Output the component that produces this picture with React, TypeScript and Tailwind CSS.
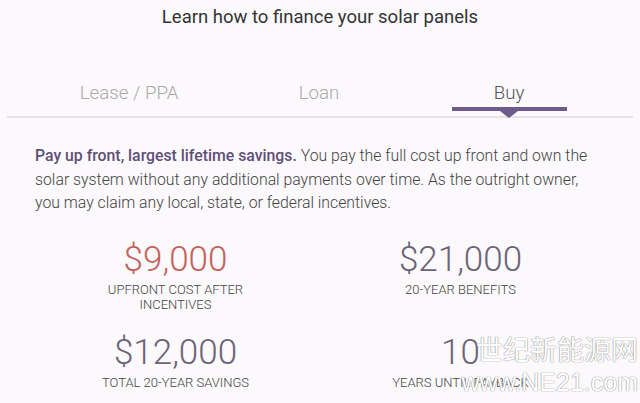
const tabs = ["Lease / PPA", "Loan", "Buy"];

const stats = [
  { value: "$9,000", label: "UPFRONT COST AFTER INCENTIVES", color: "text-[#c4615c]" },
  { value: "$21,000", label: "20-YEAR BENEFITS", color: "text-[#6b6478]" },
  { value: "$12,000", label: "TOTAL 20-YEAR SAVINGS", color: "text-[#6b6478]" },
  { value: "10", label: "YEARS UNTIL PAYBACK", color: "text-[#6b6478]" },
];

export default function App() {
  return (
    <div className="relative h-[403px] w-[640px] overflow-hidden bg-[#fbf9fb] font-['Roboto',sans-serif] text-[#444]">
      <h1 className="pt-[6px] text-center text-[18.5px] leading-[22px] text-[#333]">
        Learn how to finance your solar panels
      </h1>

      {/* tabs */}
      <div className="relative mx-[7px] mt-[54px] border-b-2 border-[#e6e2e6]">
        <div className="ml-[27px] grid w-[570px] grid-cols-3">
          {tabs.map((t, i) => {
            const active = i === 2;
            return (
              <div key={t} className="relative flex flex-col items-center">
                <span
                  className={`pb-[12px] text-[18.7px] leading-[22px] font-light ${
                    active ? "text-[#555]" : "text-[#aaa]"
                  }`}
                >
                  {t}
                </span>
                {active && (
                  <div className="absolute -bottom-[2px] flex flex-col items-center">
                    <div className="h-[4px] w-[115px] bg-[#6f5a8c]" />
                    <div className="h-0 w-0 border-x-[9px] border-t-[7px] border-x-transparent border-t-[#6f5a8c]" />
                  </div>
                )}
              </div>
            );
          })}
        </div>
      </div>

      <p className="mt-[26px] w-[595px] pl-[35px] text-[15.8px] leading-[23.5px] font-light text-[#444]">
        <span className="font-medium text-[#5f4f78]">Pay up front, largest lifetime savings.</span>{" "}
        You pay the full cost up front and own the solar system without any additional payments over
        time. As the outright owner, you may claim any local, state, or federal incentives.
      </p>

      <div className="mt-[25px] ml-[33px] grid w-[570px] grid-cols-2 gap-y-[21px]">
        {stats.map((s) => (
          <div key={s.label} className="flex flex-col items-center">
            <div className={`text-[35px] leading-[40px] font-light ${s.color}`}>{s.value}</div>
            <div className="mt-[2px] w-[180px] text-center text-[13px] leading-[15px] font-light text-[#444]">
              {s.label}
            </div>
          </div>
        ))}
      </div>

      {/* watermark */}
      <div className="pointer-events-none absolute top-[330px] right-[2px] flex flex-col items-end text-white [text-shadow:0_0_1px_#888,0_0_1px_#888]">
        <span className="font-['Noto_Sans_CJK_SC',sans-serif] text-[27px] leading-[38px] tracking-[0px]">
          世纪新能源网
        </span>
        <span className="text-[25px] leading-[28px] font-['Liberation_Sans',sans-serif]">www.NE21.com</span>
      </div>
    </div>
  );
}
